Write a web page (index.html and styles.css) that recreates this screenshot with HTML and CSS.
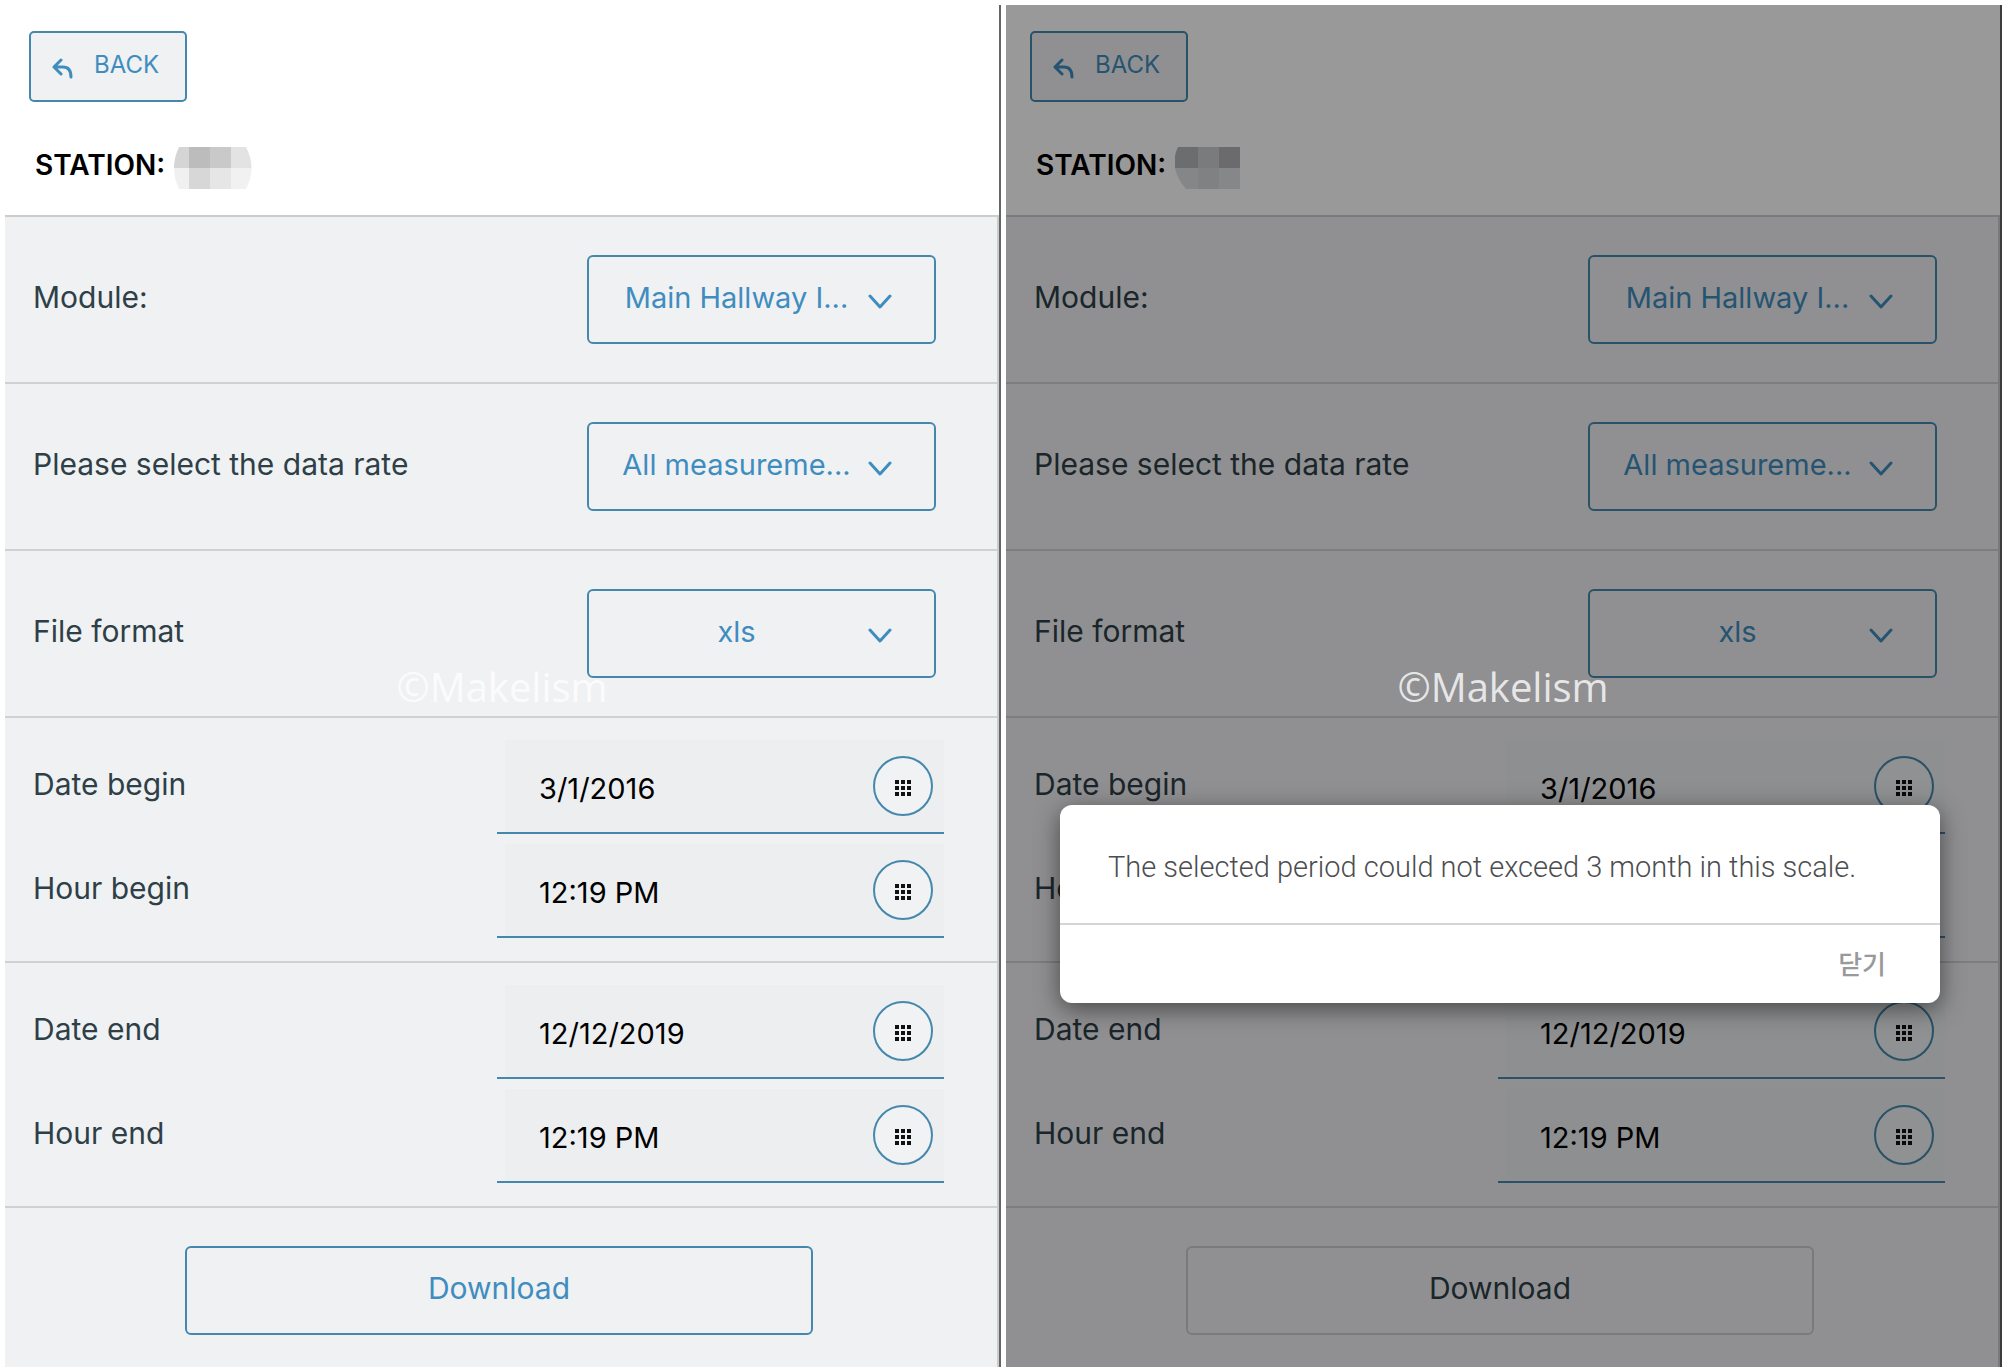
FILE: index.html
```
<!DOCTYPE html>
<html lang="en">
<head>
    <meta charset="UTF-8">
    <meta name="viewport" content="width=device-width, initial-scale=1.0">
    <title>Station data download</title>
    <link rel="stylesheet" href="styles.css">
</head>
<body>

    <!-- shared icons -->
    <svg class="sprite" aria-hidden="true">
        <symbol id="icon-back" viewBox="0 0 22 22">
            <path d="M10 2 L3 9 L10 16 M3 9 H12 Q20 9 20 19" fill="none" stroke="currentColor" stroke-width="3" stroke-linecap="round" stroke-linejoin="round"/>
        </symbol>
        <symbol id="icon-chevron" viewBox="0 0 24 16">
            <path d="M2 2 L12 13 L22 2" fill="none" stroke="currentColor" stroke-width="3" stroke-linecap="round" stroke-linejoin="round"/>
        </symbol>
        <symbol id="icon-grid" viewBox="0 0 18 18">
            <path d="M1 1h4v4h-4z M7 1h4v4h-4z M13 1h4v4h-4z M1 7h4v4h-4z M7 7h4v4h-4z M13 7h4v4h-4z M1 13h4v4h-4z M7 13h4v4h-4z M13 13h4v4h-4z" fill="currentColor"/>
        </symbol>
    </svg>

    <div class="screens">

        <!-- form -->
        <section class="screen">
            <header class="header">
                <button class="back" type="button"><svg class="back-icon"><use href="#icon-back"/></svg>BACK</button>
                <h1 class="station">STATION:
                    <svg class="mosaic" viewBox="0 0 78 42" aria-hidden="true">
                        <clipPath id="round"><path d="M5 0 H72 Q83 21 72 42 H5 Q-5 21 5 0z"/></clipPath>
                        <g clip-path="url(#round)" shape-rendering="crispEdges">
                            <path fill="#d4d5d4" d="M0 0h15v21h-15z"/>
                            <path fill="#bbbcbb" d="M15 0h21v21h-21z"/>
                            <path fill="#c8c9c8" d="M36 0h21v21h-21z"/>
                            <path fill="#e2e3e2" d="M57 0h21v21h-21z"/>
                            <path fill="#eff0ef" d="M0 21h15v21h-15z"/>
                            <path fill="#d6d7d6" d="M15 21h21v21h-21z"/>
                            <path fill="#e5e6e5" d="M36 21h21v21h-21z"/>
                            <path fill="#f0f1f0" d="M57 21h21v21h-21z"/>
                        </g>
                    </svg>
                </h1>
            </header>
            <form class="form">
                <div class="row">
                    <label class="label" for="module">Module:</label>
                    <div class="select">
                        <select class="select-box" id="module"><option>Main Hallway I...</option></select>
                        <svg class="chevron"><use href="#icon-chevron"/></svg>
                    </div>
                </div>
                <div class="row">
                    <label class="label" for="rate">Please select the data rate</label>
                    <div class="select">
                        <select class="select-box" id="rate"><option>All measureme...</option></select>
                        <svg class="chevron"><use href="#icon-chevron"/></svg>
                    </div>
                </div>
                <div class="row">
                    <label class="label" for="format">File format</label>
                    <div class="select">
                        <select class="select-box" id="format"><option>xls</option></select>
                        <svg class="chevron"><use href="#icon-chevron"/></svg>
                    </div>
                </div>
                <div class="period">
                    <div class="line">
                        <label class="label" for="date-begin">Date begin</label>
                        <div class="field">
                            <input class="field-input" id="date-begin" type="text" value="3/1/2016">
                            <button class="picker" type="button" aria-label="Pick date"><svg class="grid-icon"><use href="#icon-grid"/></svg></button>
                        </div>
                    </div>
                    <div class="line">
                        <label class="label" for="hour-begin">Hour begin</label>
                        <div class="field">
                            <input class="field-input" id="hour-begin" type="text" value="12:19 PM">
                            <button class="picker" type="button" aria-label="Pick hour"><svg class="grid-icon"><use href="#icon-grid"/></svg></button>
                        </div>
                    </div>
                </div>
                <div class="period">
                    <div class="line">
                        <label class="label" for="date-end">Date end</label>
                        <div class="field">
                            <input class="field-input" id="date-end" type="text" value="12/12/2019">
                            <button class="picker" type="button" aria-label="Pick date"><svg class="grid-icon"><use href="#icon-grid"/></svg></button>
                        </div>
                    </div>
                    <div class="line">
                        <label class="label" for="hour-end">Hour end</label>
                        <div class="field">
                            <input class="field-input" id="hour-end" type="text" value="12:19 PM">
                            <button class="picker" type="button" aria-label="Pick hour"><svg class="grid-icon"><use href="#icon-grid"/></svg></button>
                        </div>
                    </div>
                </div>
                <div class="actions">
                    <button class="download" type="button">Download</button>
                </div>
            </form>
            <div class="watermark">©Makelism</div>
        </section>

        <!-- form with the period alert -->
        <section class="screen">
            <header class="header">
                <button class="back" type="button"><svg class="back-icon"><use href="#icon-back"/></svg>BACK</button>
                <h1 class="station">STATION:
                    <svg class="mosaic" viewBox="0 0 78 42" aria-hidden="true">
                        <clipPath id="round-left"><path d="M3 0 H65 V42 H11 Q-7 21 3 0z"/></clipPath>
                        <g clip-path="url(#round-left)" shape-rendering="crispEdges">
                            <path fill="#b5b6b9" d="M0 0h23v21h-23z"/>
                            <path fill="#ccced0" d="M23 0h21v21h-21z"/>
                            <path fill="#b2b3b6" d="M44 0h21v21h-21z"/>
                            <path fill="#dedfe2" d="M0 21h23v21h-23z"/>
                            <path fill="#d6d7da" d="M23 21h21v21h-21z"/>
                            <path fill="#e0e1e4" d="M44 21h21v21h-21z"/>
                        </g>
                    </svg>
                </h1>
            </header>
            <form class="form">
                <div class="row">
                    <label class="label" for="module-2">Module:</label>
                    <div class="select">
                        <select class="select-box" id="module-2"><option>Main Hallway I...</option></select>
                        <svg class="chevron"><use href="#icon-chevron"/></svg>
                    </div>
                </div>
                <div class="row">
                    <label class="label" for="rate-2">Please select the data rate</label>
                    <div class="select">
                        <select class="select-box" id="rate-2"><option>All measureme...</option></select>
                        <svg class="chevron"><use href="#icon-chevron"/></svg>
                    </div>
                </div>
                <div class="row">
                    <label class="label" for="format-2">File format</label>
                    <div class="select">
                        <select class="select-box" id="format-2"><option>xls</option></select>
                        <svg class="chevron"><use href="#icon-chevron"/></svg>
                    </div>
                </div>
                <div class="period">
                    <div class="line">
                        <label class="label" for="date-begin-2">Date begin</label>
                        <div class="field">
                            <input class="field-input" id="date-begin-2" type="text" value="3/1/2016">
                            <button class="picker" type="button" aria-label="Pick date"><svg class="grid-icon"><use href="#icon-grid"/></svg></button>
                        </div>
                    </div>
                    <div class="line">
                        <label class="label" for="hour-begin-2">Hour begin</label>
                        <div class="field">
                            <input class="field-input" id="hour-begin-2" type="text" value="12:19 PM">
                            <button class="picker" type="button" aria-label="Pick hour"><svg class="grid-icon"><use href="#icon-grid"/></svg></button>
                        </div>
                    </div>
                </div>
                <div class="period">
                    <div class="line">
                        <label class="label" for="date-end-2">Date end</label>
                        <div class="field">
                            <input class="field-input" id="date-end-2" type="text" value="12/12/2019">
                            <button class="picker" type="button" aria-label="Pick date"><svg class="grid-icon"><use href="#icon-grid"/></svg></button>
                        </div>
                    </div>
                    <div class="line">
                        <label class="label" for="hour-end-2">Hour end</label>
                        <div class="field">
                            <input class="field-input" id="hour-end-2" type="text" value="12:19 PM">
                            <button class="picker" type="button" aria-label="Pick hour"><svg class="grid-icon"><use href="#icon-grid"/></svg></button>
                        </div>
                    </div>
                </div>
                <div class="actions">
                    <button class="download" type="button" disabled>Download</button>
                </div>
            </form>
            <div class="overlay">
                <div class="alert" role="alertdialog" aria-labelledby="alert-text">
                    <p class="alert-text" id="alert-text">The selected period could not exceed 3 month in this scale.</p>
                    <div class="alert-footer">
                        <button class="alert-close" type="button" lang="ko">닫기</button>
                    </div>
                </div>
            </div>
            <div class="watermark">©Makelism</div>
        </section>

    </div>

</body>
</html>
```
FILE: styles.css
```
* {
    box-sizing: border-box;
}

body {
    margin: 0;
    background-color: #fff;
    font-family: Inter, "Noto Sans CJK KR", sans-serif;
    color: #2e3f47;
}

button,
input,
select {
    font-family: inherit;
}

.sprite {
    position: absolute;
    width: 0;
    height: 0;
}

.screens {
    display: flex;
    gap: 5px;
    padding: 5px;
}

.screen {
    position: relative;
    flex: 1;
    min-width: 0;
    border-right: 2px solid #626666;
}

/* header */
.header {
    padding: 26px 24px;
    border-bottom: 2px solid #ccc;
}

.back {
    display: flex;
    align-items: center;
    gap: 21px;
    height: 71px;
    padding: 0 26px 4px 20px;
    background-color: #f0f1f3;
    border: 2px solid #4588ae;
    border-radius: 5px;
    color: #3f8dbf;
    font-size: 24px;
}

.back-icon {
    width: 22px;
    height: 22px;
    margin-top: 8px;
}

.station {
    display: flex;
    align-items: flex-start;
    gap: 9px;
    margin: 45px 0 0;
    padding-left: 6px;
    color: #000;
    font-size: 28px;
    font-weight: 600;
    line-height: 36px;
}

.mosaic {
    width: 78px;
    height: 42px;
}

/* form rows */
.form {
    background-color: #f0f1f3;
    border-right: 2px solid #ccc;
}

.row {
    display: flex;
    justify-content: space-between;
    align-items: center;
    padding: 38px 61px 38px 28px;
    border-bottom: 2px solid #d0d1d3;
}

.label {
    padding-bottom: 6px;
    font-size: 30px;
    line-height: 36px;
}

.select {
    position: relative;
    width: 349px;
    color: #3f8dbf;
}

.select-box {
    display: block;
    width: 100%;
    height: 89px;
    padding: 0 76px 5px 26px;
    appearance: none;
    background-color: transparent;
    border: 2px solid #4588ae;
    border-radius: 6px;
    color: inherit;
    font-size: 29px;
    text-align-last: center;
}

.chevron {
    position: absolute;
    top: 39px;
    right: 44px;
    width: 24px;
    height: 16px;
    pointer-events: none;
}

/* date and hour */
.period {
    display: flex;
    flex-direction: column;
    gap: 10px;
    padding: 22px 53px 23px 28px;
    border-bottom: 2px solid #d0d1d3;
}

.line {
    display: flex;
    justify-content: space-between;
    align-items: center;
}

.field {
    display: flex;
    align-items: center;
    width: 447px;
    height: 94px;
    padding: 0 11px 0 42px;
    background: linear-gradient(#edeef0, #edeef0) 8px 0 no-repeat;
    border-bottom: 2px solid #4588ae;
}

.field-input {
    flex: 1;
    min-width: 0;
    height: 60px;
    padding: 4px 0 0;
    background-color: transparent;
    border: none;
    color: #000;
    font-size: 29px;
}

.picker {
    display: flex;
    justify-content: center;
    align-items: center;
    width: 60px;
    height: 60px;
    padding: 4px 0 0;
    background-color: #f0f2f4;
    border: 2px solid #4588ae;
    border-radius: 50%;
    color: #111;
}

.grid-icon {
    width: 18px;
    height: 18px;
}

/* download */
.actions {
    display: flex;
    justify-content: center;
    padding: 38px 32px 32px 28px;
}

.download {
    width: 628px;
    height: 89px;
    padding: 0 0 5px;
    background-color: transparent;
    border: 2px solid #4588ae;
    border-radius: 6px;
    color: #3f8dbf;
    font-size: 30px;
}

.download:disabled {
    border-color: #cacbcd;
    color: #2e3f47;
}

/* alert */
.overlay {
    position: absolute;
    top: 0;
    right: -2px;
    bottom: 0;
    left: 0;
    padding: 800px 62px 0 54px;
    background-color: rgba(0, 0, 0, 0.4);
}

.alert {
    background-color: #fff;
    border-radius: 12px;
    box-shadow: 0 6px 24px rgba(0, 0, 0, 0.5);
}

.alert-text {
    margin: 0;
    padding: 44px 48px 38px;
    border-bottom: 2px solid #d4d5d5;
    color: #4c4d4f;
    font-family: Roboto, sans-serif;
    font-size: 29px;
    font-weight: 300;
    line-height: 36px;
    white-space: nowrap;
}

.alert-footer {
    display: flex;
    justify-content: flex-end;
    padding: 22px 54px 20px;
}

.alert-close {
    padding: 0;
    background: none;
    border: none;
    color: #999;
    font-size: 26px;
    font-weight: 500;
    line-height: 36px;
}

.watermark {
    position: absolute;
    top: 655px;
    left: 0;
    right: 0;
    color: rgba(255, 255, 255, 0.8);
    font-family: "Open Sans", sans-serif;
    font-size: 40px;
    line-height: 54px;
    text-align: center;
    pointer-events: none;
}
```
